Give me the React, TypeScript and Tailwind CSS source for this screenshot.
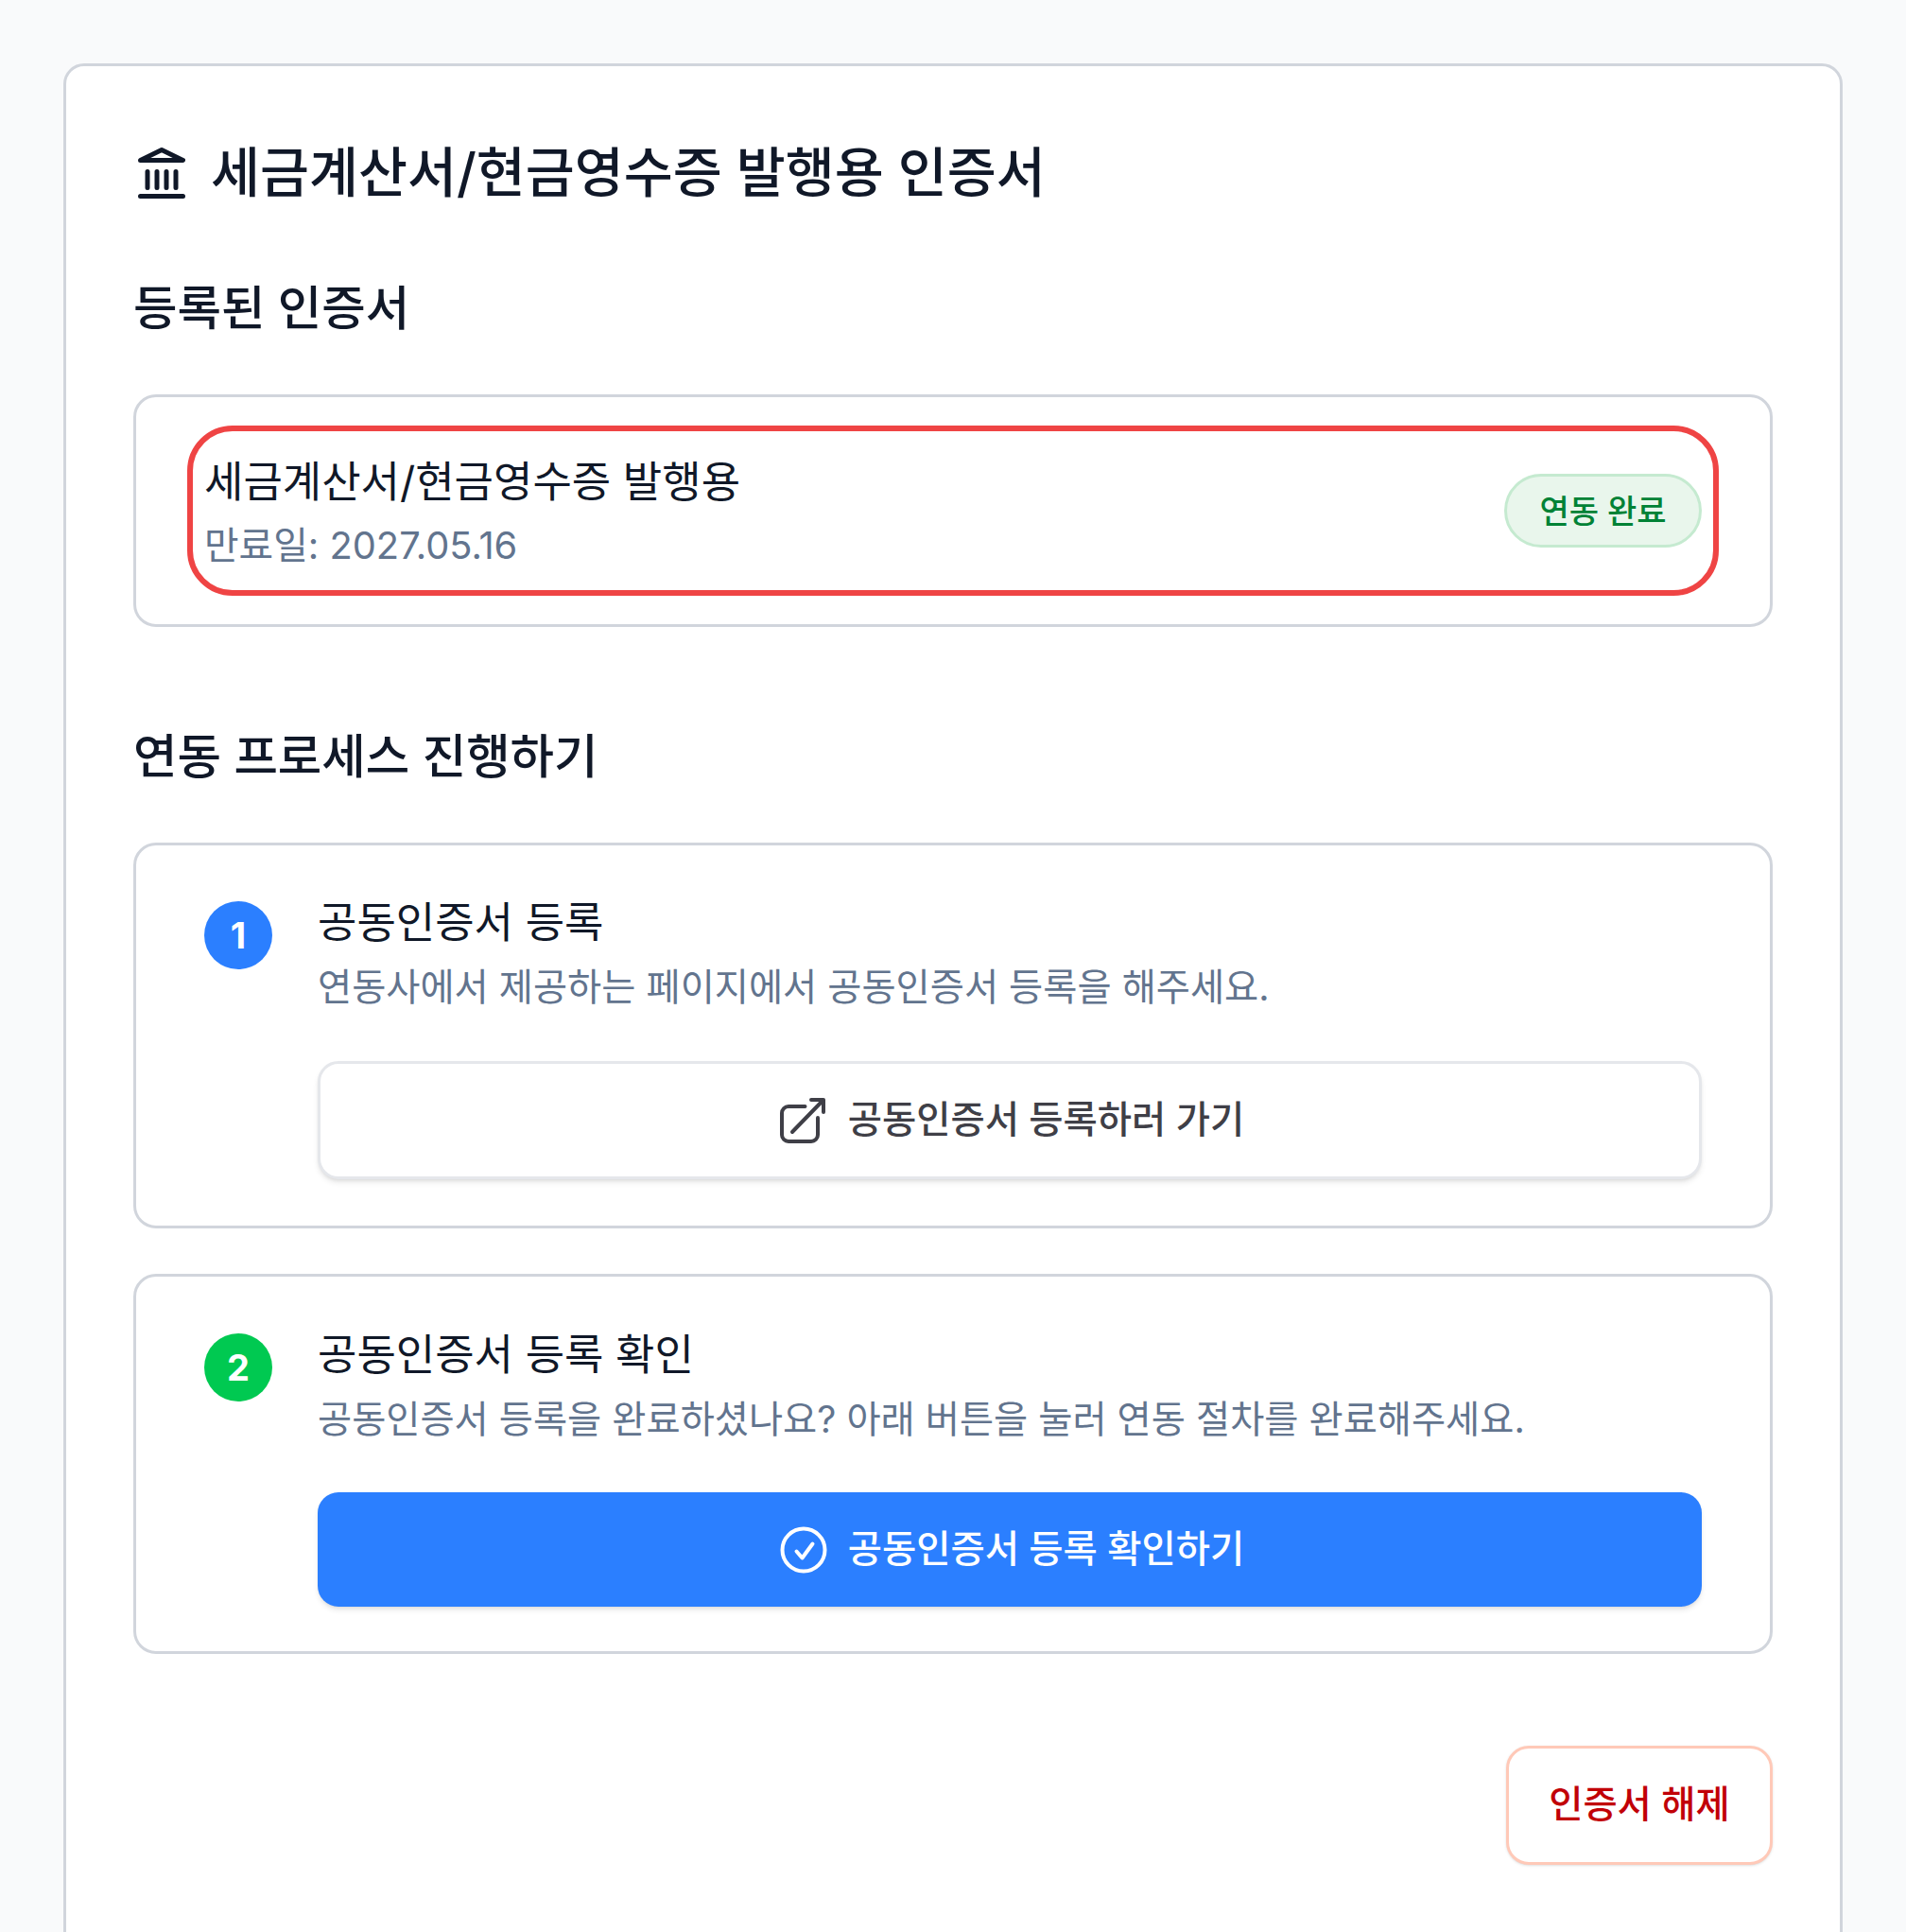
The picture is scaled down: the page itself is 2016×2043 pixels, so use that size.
function BankIcon() {
  return (
    <svg viewBox="0 0 50 56" className="w-[50px] h-[56px] shrink-0 ml-[5px] text-[#101828]" fill="none" stroke="currentColor" strokeWidth="5" strokeLinecap="round" strokeLinejoin="round">
      <path d="M25 3.5 47.5 14.5H2.5Z" />
      <path d="M10 26.5V43.5M20 26.5V43.5M30 26.5V43.5M40 26.5V43.5" />
      <path d="M2.5 52.5H47.5" />
    </svg>
  );
}

function LinkIcon() {
  return (
    <svg viewBox="0 0 50 50" className="w-[50px] h-[50px] shrink-0" fill="none" stroke="currentColor" strokeWidth="4" strokeLinecap="round" strokeLinejoin="round">
      <path d="M26.5 10H9a7 7 0 0 0-7 7V40a7 7 0 0 0 7 7H33a7 7 0 0 0 7-7V22" />
      <path d="M13 37 46 3M33 3H46V16" />
    </svg>
  );
}

function CheckIcon() {
  return (
    <svg viewBox="0 0 50 50" className="w-[50px] h-[50px] shrink-0" fill="none" stroke="currentColor" strokeWidth="4" strokeLinecap="round" strokeLinejoin="round">
      <circle cx="25" cy="25" r="22.5" />
      <path d="M17.5 26.5 23.5 33.5 34.5 18.5" />
    </svg>
  );
}

function StepCircle({ n, color }: { n: number; color: string }) {
  return (
    <div className={`w-[72px] h-[72px] rounded-full shrink-0 flex items-center justify-center text-white text-[38px] font-bold ${color}`}>
      {n}
    </div>
  );
}

export default function App() {
  return (
    <div
      className="h-[2043px] overflow-hidden bg-gray-50 pt-[67px] px-[67px]"
      style={{ fontFamily: 'Inter, "Noto Sans CJK KR", sans-serif' }}
    >
      <div className="h-[2200px] bg-white border-[3px] border-gray-300 rounded-[22px] pt-[80px] px-[71px]">
        <h1 className="flex items-center gap-[27px] text-[56.5px] leading-[66px] font-medium text-gray-900">
          <BankIcon />
          세금계산서/현금영수증 발행용 인증서
        </h1>

        <h2 className="mt-[80px] text-[50.5px] leading-[60px] font-medium text-gray-900">등록된 인증서</h2>

        <div className="mt-[61px] h-[246px] border-[3px] border-gray-300 rounded-[24px] px-[54px] pt-[30px]">
          <div className="h-[180px] border-[6px] border-[#ef4444] rounded-[48px] px-[12px] flex items-center justify-between">
            <div>
              <div className="text-[45px] leading-[62px] text-gray-900">세금계산서/현금영수증 발행용</div>
              <div className="mt-[12px] text-[39.8px] leading-[48px] text-slate-500">만료일: 2027.05.16</div>
            </div>
            <span className="w-[209px] h-[78px] rounded-full border-[3px] border-[#c5ead0] bg-[#e9f6ec] text-[#008236] text-[34px] font-medium flex items-center justify-center">
              연동 완료
            </span>
          </div>
        </div>

        <h2 className="mt-[107px] text-[50.5px] leading-[60px] font-medium text-gray-900">연동 프로세스 진행하기</h2>

        <div className="mt-[61px] h-[408px] border-[3px] border-gray-300 rounded-[24px] px-[72px] pt-[59px] flex gap-[48px]">
          <StepCircle n={1} color="bg-blue-500" />
          <div className="flex-1">
            <div className="text-[45px] leading-[46px] text-gray-900">공동인증서 등록</div>
            <div className="mt-[18px] text-[39.3px] leading-[54px] text-slate-500">연동사에서 제공하는 페이지에서 공동인증서 등록을 해주세요.</div>
            <button className="mt-[51px] w-full h-[125px] pl-[5px] bg-white border-[3px] border-gray-200 rounded-[22px] shadow-md flex items-center justify-center gap-[22px] text-[39.4px] font-medium text-zinc-700">
              <LinkIcon />
              공동인증서 등록하러 가기
            </button>
          </div>
        </div>

        <div className="mt-[48px] h-[402px] border-[3px] border-gray-300 rounded-[24px] px-[72px] pt-[60px] flex gap-[48px]">
          <StepCircle n={2} color="bg-green-500" />
          <div className="flex-1">
            <div className="text-[45px] leading-[46px] text-gray-900">공동인증서 등록 확인</div>
            <div className="mt-[18px] text-[39.3px] leading-[54px] text-slate-500">공동인증서 등록을 완료하셨나요? 아래 버튼을 눌러 연동 절차를 완료해주세요.</div>
            <button className="mt-[50px] w-full h-[121px] pl-[5px] bg-blue-500 rounded-[22px] shadow-md flex items-center justify-center gap-[22px] text-[39.4px] font-medium text-white">
              <CheckIcon />
              공동인증서 등록 확인하기
            </button>
          </div>
        </div>

        <div className="mt-[97px] flex justify-end">
          <button className="w-[282px] h-[126px] bg-white border-[3px] border-[#ffc9b8] rounded-[24px] shadow-sm text-[39.4px] font-medium text-red-700">
            인증서 해제
          </button>
        </div>
      </div>
    </div>
  );
}
